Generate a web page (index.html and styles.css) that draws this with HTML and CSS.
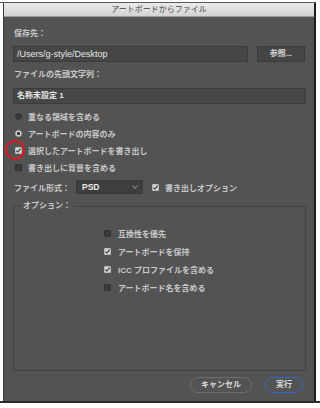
FILE: index.html
```html
<!DOCTYPE html>
<html lang="ja">
<head>
    <meta charset="UTF-8">
    <meta name="viewport" content="width=device-width, initial-scale=1.0">
    <title>アートボードからファイル</title>
    <link rel="stylesheet" href="styles.css">
</head>
<body>

    <div class="rule-top"></div>
    <div class="window">
        <div class="title-bar">アートボードからファイル</div>

        <div class="content">
            <div class="label">保存先：</div>
            <div class="path-row">
                <div class="field path">/Users/g-style/Desktop</div>
                <div class="browse">参照...</div>
            </div>

            <div class="label second">ファイルの先頭文字列：</div>
            <div class="field prefix">名称未設定 1</div>

            <div class="choices">
                <div class="row"><span class="radio"></span>重なる領域を含める</div>
                <div class="row"><span class="radio on"></span>アートボードの内容のみ</div>
                <div class="row marked">
                    <span class="check on"></span>選択したアートボードを書き出し
                    <span class="annotation"></span>
                </div>
                <div class="row"><span class="check"></span>書き出しに背景を含める</div>
            </div>

            <div class="format-row">
                <span class="format-label">ファイル形式：</span>
                <div class="select">PSD<span class="chevron"></span></div>
                <span class="check on"></span>書き出しオプション
            </div>

            <fieldset class="options">
                <legend>オプション：</legend>
                <div class="option-list">
                    <div class="row"><span class="check"></span>互換性を優先</div>
                    <div class="row"><span class="check on"></span>アートボードを保持</div>
                    <div class="row"><span class="check on"></span>ICC プロファイルを含める</div>
                    <div class="row"><span class="check"></span>アートボード名を含める</div>
                </div>
            </fieldset>

            <div class="actions">
                <div class="btn">キャンセル</div>
                <div class="btn primary">実行</div>
            </div>
        </div>
    </div>
    <div class="rule-bottom"></div>

</body>
</html>
```

FILE: styles.css
```css
/* --- Page --- */
body, html {
    margin: 0;
    padding: 0;
    width: 320px;
    height: 408px;
    overflow: hidden;
    background-color: #fff;
    font-family: 'Liberation Sans', 'Noto Sans CJK JP', sans-serif;
}

.rule-top {
    margin-top: 2px;
    width: 316px;
    height: 1px;
    background-color: #5a5a5a;
}
.rule-bottom {
    width: 320px;
    height: 2px;
    background-color: #2b2b2b;
}

/* --- Window --- */
.window {
    margin-left: 3px;
    width: 310px;
    height: 398px;
    border-left: 1px solid #3a3a3a;
    border-right: 2px solid #1f1f1f;
    background-color: #535353;
    display: flex;
    flex-direction: column;
}

.title-bar {
    height: 13px;
    line-height: 13px;
    border-bottom: 1px solid #9c9c9c;
    background: linear-gradient(#ebebeb, #d3d3d3);
    color: #474747;
    font-size: 8px;
    text-align: center;
}

.content {
    padding: 11px 8px 0 9px;
    color: #c9c9c9;
    font-size: 8px;
    font-weight: 700;
}

.label { height: 12px; line-height: 12px; padding-left: 1px; }
.label.second { margin-top: 7px; }

.path-row {
    margin-top: 6px;
    display: flex;
    gap: 9px;
}

.field {
    height: 14px;
    line-height: 14px;
    padding-left: 3px;
    background-color: #464646;
    border: 1px solid #3b3b3b;
    color: #e6e6e6;
    font-weight: 400;
}
.field.path { width: 230px; font-size: 9px; }
.field.prefix { margin-top: 7px; font-weight: 700; }

.browse {
    width: 46px;
    height: 14px;
    line-height: 14px;
    background-color: #454545;
    border: 1px solid #3b3b3b;
    color: #dcdcdc;
    text-align: center;
}

/* --- Radios and checkboxes --- */
.choices { margin-top: 4px; }

.row {
    height: 17px;
    display: flex;
    align-items: center;
    gap: 6px;
    padding-left: 2px;
}
.row.marked { position: relative; }

.radio, .check {
    flex: none;
    width: 7px;
    height: 7px;
    box-sizing: border-box;
    background-color: #3a3a3a;
    border: 1px solid #323232;
}
.radio { border-radius: 50%; }
.radio.on {
    background: radial-gradient(circle, #3a3a3a 0 1.4px, #d9d9d9 1.6px);
    border-color: #bdbdbd;
}
.check { border-radius: 1px; }
.check.on {
    background-color: #d4d4d4;
    border-color: #bcbcbc;
    background-image: url("data:image/svg+xml,%3Csvg xmlns='http://www.w3.org/2000/svg' viewBox='0 0 7 7'%3E%3Cpath d='M1.3 3.6 L2.8 5 L5.8 1.6' fill='none' stroke='%23333' stroke-width='1.1'/%3E%3C/svg%3E");
    background-size: 7px 7px;
    background-position: center;
}

.annotation {
    position: absolute;
    left: -8px;
    top: -2px;
    width: 16px;
    height: 16px;
    border: 2.5px solid #e4151f;
    border-radius: 50%;
}

/* --- File format --- */
.format-row {
    margin-top: 2px;
    height: 18px;
    display: flex;
    align-items: center;
    padding-left: 1px;
}
.format-label { width: 62px; }

.select {
    position: relative;
    width: 60px;
    height: 12px;
    line-height: 12px;
    padding-left: 5px;
    margin-right: 9px;
    background-color: #3e3e3e;
    border: 1px solid #383838;
    color: #ececec;
    font-size: 8.5px;
}
.chevron {
    position: absolute;
    right: 5px;
    top: 3px;
    width: 3px;
    height: 3px;
    border-right: 1px solid #8a8a8a;
    border-bottom: 1px solid #8a8a8a;
    transform: rotate(45deg);
}
.format-row .check { margin-right: 6px; }

/* --- Options group --- */
.options {
    margin: 5px 0 0 0;
    padding: 13px 0 74px 0;
    border: 1px solid #434343;
    min-width: 0;
}
.options legend {
    padding: 0 2px;
    margin-left: 7px;
    height: 10px;
    line-height: 10px;
}
.option-list { padding-left: 90px; }
.options .row { height: 18px; gap: 7px; padding-left: 0; }

/* --- Buttons --- */
.actions {
    margin-top: 6px;
    display: flex;
    justify-content: flex-end;
    gap: 13px;
    padding-right: 3px;
}
.btn {
    height: 14px;
    line-height: 14px;
    padding: 0;
    width: 60px;
    border: 1px solid #6c6c6c;
    border-radius: 8px;
    color: #dcdcdc;
    text-align: center;
}
.btn.primary {
    width: 36px;
    border-color: #2f6cc4;
}
```
